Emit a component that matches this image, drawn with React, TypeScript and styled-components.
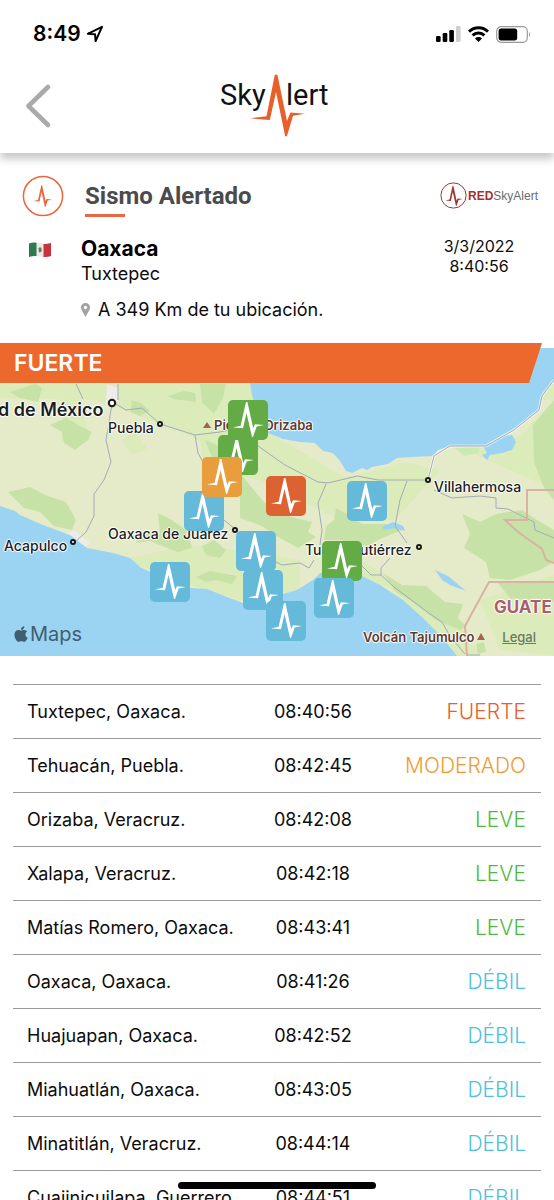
import React from "react";
import styled, { createGlobalStyle } from "styled-components";
import { FaApple } from "react-icons/fa";

const GlobalStyle = createGlobalStyle`
  *, *::before, *::after { box-sizing: border-box; }
  body {
    margin: 0;
    background: #fff;
    color: #0c0c0c;
    font-family: Inter, "Liberation Sans", sans-serif;
  }
`;

const ORANGE = "#ec682d";

const Screen = styled.div`
  height: 100vh;
  display: flex;
  flex-direction: column;
  overflow: hidden;
  background: #fff;
`;

const Header = styled.header`
  flex: none;
  position: relative;
  z-index: 3;
  background: #fff;
  box-shadow: 0 6px 8px rgba(0, 0, 0, 0.22);
`;

const StatusBar = styled.div`
  display: flex;
  align-items: center;
  justify-content: space-between;
  height: 68px;
  padding: 0 23px 0 33px;
`;

const Clock = styled.div`
  display: flex;
  align-items: center;
  gap: 5px;
  font-size: 21px;
  line-height: 24px;
  font-weight: 600;
  color: #000;
`;

const StatusIcons = styled.div`
  display: flex;
  align-items: center;
  gap: 7px;
  color: #000;
`;

const NavBar = styled.div`
  display: grid;
  grid-template-columns: 1fr auto 1fr;
  align-items: start;
  height: 85px;
  padding: 0 20px;
`;

const BackButton = styled.button`
  width: 36px;
  height: 48px;
  margin-top: 14px;
  padding: 0;
  border: 0;
  background: none;
  cursor: pointer;
  svg { display: block; }
`;

const LogoBox = styled.div`
  margin-top: 5px;
  svg { display: block; }
`;

const Content = styled.main`
  flex: 1;
  min-height: 0;
  overflow-y: auto;
  scrollbar-width: none;
`;

const Summary = styled.section`
  padding: 20px 16px 0 22px;
`;

const TitleRow = styled.div`
  display: flex;
  align-items: center;
  height: 45px;
`;

const Title = styled.h1`
  flex: 1;
  margin: 0 0 0 21px;
  padding-top: 4px;
  font-family: Roboto, sans-serif;
  font-size: 24px;
  line-height: 36px;
  font-weight: 700;
  color: #4b4b4d;
  &::after {
    content: "";
    display: block;
    width: 40px;
    height: 3px;
    background: #e56a42;
  }
`;

const Network = styled.div`
  display: flex;
  align-items: center;
  gap: 1px;
  font-family: "Liberation Sans", sans-serif;
  font-size: 12px;
  line-height: 16px;
  color: #6b6b6b;
  b { color: #a3322e; }
`;

const PlaceRow = styled.div`
  display: flex;
  align-items: flex-start;
  padding-top: 18px;
`;

const FlagCell = styled.div`
  width: 59px;
  padding: 6px 0 0 7px;
  svg { display: block; }
`;

const Place = styled.div`
  flex: 1;
`;

const StateName = styled.h2`
  margin: 0;
  font-size: 21px;
  line-height: 26px;
  font-weight: 700;
  color: #000;
`;

const Locality = styled.p`
  margin: 0;
  font-size: 18px;
  line-height: 24px;
`;

const Distance = styled.p`
  display: flex;
  align-items: center;
  gap: 8px;
  margin: 12px 0 0;
  font-size: 18px;
  line-height: 24px;
`;

const DateTime = styled.time`
  width: 86px;
  margin-right: 16px;
  font-size: 16px;
  line-height: 20px;
  text-align: center;
`;

const MapArea = styled.section`
  position: relative;
  margin-top: 26px;
  height: 308px;
`;

const MapCanvas = styled.div`
  position: absolute;
  inset: 0;
  overflow: hidden;
  background: #9bd4f2;
`;

const Terrain = styled.svg`
  display: block;
  width: 100%;
  height: 100%;
`;

const Banner = styled.h2`
  position: absolute;
  top: -5px;
  left: 0;
  right: 12px;
  z-index: 2;
  height: 40px;
  margin: 0;
  padding-left: 14px;
  background: ${ORANGE};
  clip-path: polygon(0 0, 100% 0, calc(100% - 13px) 100%, 0 100%);
  color: #fff;
  font-size: 23px;
  line-height: 40px;
  font-weight: 600;
`;

type Spot = { x: number; y: number };

const Label = styled.span<Spot & { $size?: number; $weight?: number; $color?: string }>`
  position: absolute;
  left: ${(p) => (p.x / 554) * 100}%;
  top: ${(p) => p.y}px;
  transform: translateY(-50%);
  white-space: nowrap;
  font-size: ${(p) => p.$size ?? 14}px;
  line-height: 20px;
  font-weight: ${(p) => p.$weight ?? 500};
  color: ${(p) => p.$color ?? "#1d1d1f"};
  text-shadow: 0 0 2px #fff, 1px 0 1px #fff, -1px 0 1px #fff, 0 1px 1px #fff, 0 -1px 1px #fff;
`;

const Pin = styled.svg<Spot & { $color: string }>`
  position: absolute;
  left: ${(p) => (p.x / 554) * 100}%;
  top: ${(p) => p.y}px;
  width: 40px;
  height: 40px;
  border-radius: 5px;
  background: ${(p) => p.$color};
`;

const MapsMark = styled.div`
  position: absolute;
  left: 12px;
  bottom: 9px;
  display: flex;
  align-items: center;
  color: #3f5f70;
  font-size: 20px;
  line-height: 26px;
  font-weight: 400;
`;

const Legal = styled.a`
  position: absolute;
  right: 18px;
  bottom: 10px;
  color: #6f7865;
  font-size: 13px;
  line-height: 18px;
  font-weight: 500;
`;

const Reports = styled.table`
  width: calc(100% - 26px);
  margin: 28px 13px 0;
  border-collapse: collapse;
  table-layout: fixed;
`;

const Report = styled.tr`
  height: 54px;
  border-top: 1px solid #9b9b9b;
`;

const Station = styled.td`
  width: 46%;
  padding: 0 0 0 14px;
  font-size: 18px;
  line-height: 24px;
  white-space: nowrap;
`;

const Hour = styled.td`
  width: 22%;
  padding: 0 2px 0 0;
  font-size: 18px;
  line-height: 24px;
  text-align: center;
`;

const Level = styled.td<{ $color: string }>`
  padding: 0 15px 0 0;
  font-size: 21px;
  line-height: 24px;
  font-weight: 300;
  text-align: right;
  color: ${(p) => p.$color};
`;

const HomeIndicator = styled.div`
  position: fixed;
  left: 50%;
  bottom: 11px;
  z-index: 4;
  width: 198px;
  height: 7px;
  margin-left: -99px;
  border-radius: 4px;
  background: #000;
`;

const PULSE =
  "M5 27.5 L12.6 25.7 L18 2 H19.4 L25.2 28 L27 24.2 L36 25 L28.7 26.6 L25 37 H24 L18.5 13 L15 28.3 Z";

const PIN_COLORS = { red: "#dc6231", orange: "#e89e3c", green: "#62ab45", blue: "#65b9d9" };

const pins: (Spot & { c: keyof typeof PIN_COLORS })[] = [
  { x: 218, y: 87, c: "green" },
  { x: 228, y: 52, c: "green" },
  { x: 184, y: 143, c: "blue" },
  { x: 202, y: 109, c: "orange" },
  { x: 266, y: 128, c: "red" },
  { x: 347, y: 133, c: "blue" },
  { x: 236, y: 183, c: "blue" },
  { x: 243, y: 222, c: "blue" },
  { x: 266, y: 253, c: "blue" },
  { x: 150, y: 214, c: "blue" },
  { x: 322, y: 193, c: "green" },
  { x: 314, y: 230, c: "blue" },
];

const LEVELS = {
  FUERTE: "#e9602c",
  MODERADO: "#f09c33",
  LEVE: "#4fb93f",
  "DÉBIL": "#4fc0dc",
};

const reports: [string, string, keyof typeof LEVELS][] = [
  ["Tuxtepec, Oaxaca.", "08:40:56", "FUERTE"],
  ["Tehuacán, Puebla.", "08:42:45", "MODERADO"],
  ["Orizaba, Veracruz.", "08:42:08", "LEVE"],
  ["Xalapa, Veracruz.", "08:42:18", "LEVE"],
  ["Matías Romero, Oaxaca.", "08:43:41", "LEVE"],
  ["Oaxaca, Oaxaca.", "08:41:26", "DÉBIL"],
  ["Huajuapan, Oaxaca.", "08:42:52", "DÉBIL"],
  ["Miahuatlán, Oaxaca.", "08:43:05", "DÉBIL"],
  ["Minatitlán, Veracruz.", "08:44:14", "DÉBIL"],
  ["Cuajinicuilapa, Guerrero.", "08:44:51", "DÉBIL"],
];

function Logo() {
  return (
    <svg width="114" height="64" viewBox="220 73 114 64" role="img" aria-label="SkyAlert">
      <g fill="#111" fontFamily="Roboto, sans-serif" fontSize="29">
        <text x="220" y="105">Sky</text>
        <text x="286" y="105">lert</text>
      </g>
      <path
        fill="#e95f2a"
        d="M250 118.3 L266.5 116.3 L274.8 74.7 H277.4 L287 121 L290.4 112.6 L305 113.8 L293 115.8 L286.9 136.3 H285.2 L276 92 L269.8 120 Z"
      />
    </svg>
  );
}

function AlertBadge() {
  return (
    <svg width="42" height="42" viewBox="0 0 42 42" aria-hidden="true">
      <circle cx="21" cy="21" r="19.6" fill="#fff" stroke="#e9673c" strokeWidth="1.5" />
      <path fill="#e9673c" d={PULSE} transform="translate(8.500 9) scale(.6 .62)" />
    </svg>
  );
}

function NetworkBadge() {
  return (
    <svg width="27" height="27" viewBox="0 0 27 27" aria-hidden="true">
      <circle cx="13.5" cy="13.5" r="12.6" fill="#fff" stroke="#a3322e" strokeWidth="1" />
      <path fill="#a3322e" d={PULSE} transform="translate(2.500 2.500) scale(.56 .58)" />
    </svg>
  );
}

function MexicoFlag() {
  return (
    <svg width="22" height="16" viewBox="0 0 22 16" role="img" aria-label="México">
      <path fill="#e9e9e6" d="M0 1.6 Q5 -.2 11 1.3 T22 1 V14 Q17 15.8 11 14.5 T0 15 Z" />
      <path fill="#2d7a4d" d="M0 1.6 Q3.5 .3 7.5 .7 V14 Q3.5 13.6 0 15 Z" />
      <path fill="#c8323f" d="M14.5 1.9 Q18.5 2 22 1 V14 Q18.5 15.3 14.5 15 Z" />
      <path fill="#7d7455" d="M9.4 6.4 Q11 4.4 12.4 6 L12.8 8.6 Q12.2 10.6 10.6 10.6 Q9.4 10 9.7 8.2 Z" />
    </svg>
  );
}

function MapTerrain() {
  return (
    <Terrain viewBox="0 348 554 308" preserveAspectRatio="none" aria-hidden="true">
      <rect y="348" width="554" height="308" fill="#e5ebc8" />
      <g fill="#dcebba">
        <path d="M0 384 H120 L160 384 L250 384 L262 430 L290 445 L345 478 L405 462 L440 470 L395 520 L340 520 L300 500 L260 480 L205 470 L200 440 L150 420 L95 400 L0 398 Z" />
        <path d="M554 400 L520 436 L470 452 L510 470 L554 490 Z M122 440 L135 430 L148 450 L132 455 Z M120 560 L190 545 L240 550 L300 560 L300 590 L240 600 L190 585 L140 566 Z" />
        <path d="M320 570 L360 560 L410 590 L460 625 L480 656 H455 L430 625 L390 588 Z M455 350 L554 350 V400 H455 Z M60 390 L80 396 L90 440 L62 442 Z M480 600 L554 575 V656 L500 650 Z" />
      </g>
      <g fill="#c7e2a7">
        <path d="M10 392 L35 384 L42 388 L38 402 L20 398 Z M50 425 L66 418 L80 426 L92 432 L88 440 L75 450 L64 443 L62 432 Z M168 396 L184 391 L195 393 L196 402 L174 399 Z M200 384 L226 384 L223 398 L214 414 L202 402 Z M132 400 L142 404 L150 411 L140 416 L131 412 Z" />
        <path d="M205 440 L222 447 L240 473 L262 500 L280 514 L312 522 L308 532 L316 537 L298 548 L280 538 L262 526 L240 518 L240 484 L214 462 Z" />
        <path d="M8 492 L30 487 L45 495 L66 502 L76 520 L72 530 L54 526 L40 512 L24 508 Z M158 513 L172 520 L188 532 L192 548 L178 552 L162 546 L150 541 L136 543 L140 532 L160 534 Z M202 546 L214 540 L226 550 L220 558 L206 555 Z M196 577 L210 571 L237 576 L232 584 L216 580 L206 582 Z" />
        <path d="M326 526 L334 520 L336 508 L350 516 L362 524 L392 524 L402 530 L382 538 L367 546 L340 540 L324 540 Z" />
        <path d="M462 514 L480 522 L496 514 L522 510 L534 518 L554 530 V562 L540 570 L510 580 L490 578 L486 562 L464 548 L470 534 Z M533 425 L554 400 V500 L544 488 L534 462 Z M498 583 H554 V602 L534 600 L510 598 Z" />
        <path d="M383 573 L402 585 L426 586 L445 602 L463 604 L458 618 L466 626 L460 630 L436 620 L410 600 L396 592 Z M476 644 L484 642 L486 652 L478 654 Z" />
        <path fill="#c8ebb0" d="M455 448 L480 446 L478 453 L464 456 Z" />
      </g>
      <g fill="#ececea">
        <path d="M107 384 L118 388 L118 402 L106 404 Z M62 535 L74 530 L90 543 L84 548 Z" />
      </g>
      <g fill="#9bd4f2">
        <path d="M250 348 L250 383 L252 395 L258 415 L268 433 L283 439 L300 442 L315 443 L323 451 L333 453 L340 461 L346 471 L352 473 L362 468 L367 470 L372 467 L388 464 L397 458 L412 457 L433 456 L438 450 L450 446 L483 446 L517 427 L538 411 L542 396 L554 380 V348 Z" />
        <path d="M483 446 L487 453 L482 455 L487 460 L490 455 L502 453 L512 450 L516 442 L512 435 L504 436 Z" />
        <path d="M0 506 L15 511 L20 515 L43 525 L70 535 L87 548 L113 553 L130 558 L140 567 L150 572 L190 588 L207 589 L227 597 L243 603 L283 594 L297 590 L313 580 L320 573 L345 570 L362 576 L380 585 L403 600 L423 618 L440 635 L457 656 H0 Z" />
        <path d="M435 570 L448 576 L460 586 L466 591 L450 585 L442 580 Z M382 527 L393 522 L403 526 L405 531 L394 528 L384 530 Z" />
      </g>
      <g fill="none" stroke="#fff" strokeOpacity=".5" strokeWidth="3">
        <path d="M428 480 L434 456 L450 446 L486 446 L514 430 L539 410 L542 396 L554 380" />
      </g>
      <g fill="none" stroke="#a4aab8" strokeWidth="1">
        <path d="M116 404 L126 410 L142 408 L160 424 L195 435 L220 432 L230 430 M195 435 L198 453 L204 464 M258 446 L285 465 L318 482 L328 483 L357 476 L378 480 L428 480 L434 456 L450 446 L486 446 L514 430 L539 410 L542 396 L554 380" />
        <path d="M112 404 L106 440 L111 462 L104 480 L94 494 V516 L86 532 L74 543 M76 384 L83 399 M118 384 L118 400 M224 520 L235 529" />
        <path d="M326 484 L318 503 L322 530 L320 545 M407 481 L400 500 L395 526 L407 543 M276 562 L282 565 L300 563 L309 568 L314 560 M362 566 L371 575 L381 575 L394 587 L430 614 L442 622 L450 636 L465 654 M381 575 V568 L390 558" />
        <path d="M434 490 L452 498 L480 496 L496 498 L496 508 L508 509 L534 522 L535 530 L554 538 M466 655 H480" />
      </g>
      <g fill="none" stroke="#d9b3a0" strokeWidth="2">
        <path d="M554 490 H527 V520 H505 L518 532 L542 549 L546 560 L554 563 M554 582 H489 L465 626 L467 656" />
      </g>
      <g fill="#fff" stroke="#18181a" strokeWidth="2">
        <circle cx="112" cy="403" r="3.2" />
        <circle cx="160" cy="424" r="2" />
        <circle cx="73" cy="542" r="2" />
        <circle cx="235" cy="530" r="2" />
        <circle cx="428" cy="480" r="2" />
        <circle cx="419" cy="547" r="2" />
      </g>
      <path fill="#a9624d" d="M207 422 L211 428 H203 Z M481 633 L485 640 H477 Z" />
    </Terrain>
  );
}

export default function App() {
  return (
    <Screen>
      <GlobalStyle />
      <Header>
        <StatusBar>
          <Clock>
            8:49
            <svg width="18" height="18" viewBox="0 0 18 18" aria-hidden="true">
              <path d="M1.8 8.8 L16 1.8 L9.6 16 L9 9.2 Z" fill="none" stroke="#000" strokeWidth="2" strokeLinejoin="round" />
            </svg>
          </Clock>
          <StatusIcons>
            <svg width="25" height="16" viewBox="0 0 25 16" aria-hidden="true">
              <rect x="0" y="10" width="4.6" height="6" rx="1.2" />
              <rect x="6.7" y="7" width="4.6" height="9" rx="1.2" />
              <rect x="13.3" y="4" width="4.6" height="12" rx="1.2" />
              <rect x="20" y="0" width="4.6" height="16" rx="1.2" fill="#cfcfcf" />
            </svg>
            <svg width="21" height="16" viewBox="0 0 21 16" aria-hidden="true">
              <g fill="none" stroke="#000" strokeWidth="3">
                <path d="M1 5.6 A13.6 13.6 0 0 1 20 5.6" />
                <path d="M4.6 9.4 A8.4 8.4 0 0 1 16.4 9.4" />
              </g>
              <path d="M10.5 16 L7 12.5 A5 5 0 0 1 14 12.5 Z" />
            </svg>
            <svg width="35" height="17" viewBox="0 0 35 17" aria-hidden="true">
              <rect x=".7" y=".7" width="30.6" height="15.6" rx="4.5" fill="none" stroke="#999" strokeWidth="1.2" />
              <rect x="2.6" y="2.6" width="18.6" height="11.8" rx="2.6" />
              <path d="M33 5.8 Q35 8.5 33 11.2 Z" fill="#999" />
            </svg>
          </StatusIcons>
        </StatusBar>
        <NavBar>
          <BackButton type="button" aria-label="Volver">
            <svg width="36" height="48" viewBox="0 0 36 48" aria-hidden="true">
              <path d="M28 5 L8.5 24 L28 43" fill="none" stroke="#aaa" strokeWidth="4.6" strokeLinecap="round" strokeLinejoin="round" />
            </svg>
          </BackButton>
          <LogoBox>
            <Logo />
          </LogoBox>
        </NavBar>
      </Header>

      <Content>
        <Summary>
          <TitleRow>
            <AlertBadge />
            <Title>Sismo Alertado</Title>
            <Network>
              <NetworkBadge />
              <span><b>RED</b>SkyAlert</span>
            </Network>
          </TitleRow>
          <PlaceRow>
            <FlagCell>
              <MexicoFlag />
            </FlagCell>
            <Place>
              <StateName>Oaxaca</StateName>
              <Locality>Tuxtepec</Locality>
              <Distance>
                <svg width="9" height="14" viewBox="0 0 9 14" aria-hidden="true">
                  <path fill="#a3a3a3" fillRule="evenodd" d="M4.5 0 A4.4 4.4 0 0 0 0 4.5 C0 7.5 3 10.5 4.5 14 C6 10.5 9 7.5 9 4.5 A4.4 4.4 0 0 0 4.5 0 Z M4.5 2.8 A1.7 1.7 0 1 1 4.49 2.8 Z" />
                </svg>
                A 349 Km de tu ubicación.
              </Distance>
            </Place>
            <DateTime dateTime="2022-03-03T08:40:56">
              3/3/2022
              <br />
              8:40:56
            </DateTime>
          </PlaceRow>
        </Summary>

        <MapArea aria-label="Mapa">
          <Banner>FUERTE</Banner>
          <MapCanvas>
            <MapTerrain />
            <Label x={-2} y={62} $size={18} $weight={600}>d de México</Label>
            <Label x={108} y={80}>Puebla</Label>
            <Label x={214} y={77} $size={13} $weight={600} $color="#5c3a2e">Pico de Orizaba</Label>
            <Label x={434} y={139}>Villahermosa</Label>
            <Label x={108} y={186}>Oaxaca de Juárez</Label>
            <Label x={4} y={198}>Acapulco</Label>
            <Label x={305} y={202}>Tuxtla Gutiérrez</Label>
            <Label x={363} y={289} $size={13} $weight={600} $color="#5c3a2e">Volcán Tajumulco</Label>
            <Label x={494} y={259} $size={17} $weight={700} $color="#aa5f6a">GUATE</Label>
            {pins.map((p, i) => (
              <Pin key={i} x={p.x} y={p.y} $color={PIN_COLORS[p.c]} viewBox="0 0 40 40">
                <path fill="#fff" d={PULSE} />
              </Pin>
            ))}
            <MapsMark>
              <FaApple size={18} aria-hidden="true" />
              Maps
            </MapsMark>
            <Legal href="#legal">Legal</Legal>
          </MapCanvas>
        </MapArea>

        <Reports>
          <tbody>
            {reports.map(([station, hour, level]) => (
              <Report key={station}>
                <Station>{station}</Station>
                <Hour>{hour}</Hour>
                <Level $color={LEVELS[level]}>{level}</Level>
              </Report>
            ))}
          </tbody>
        </Reports>
      </Content>
      <HomeIndicator />
    </Screen>
  );
}
